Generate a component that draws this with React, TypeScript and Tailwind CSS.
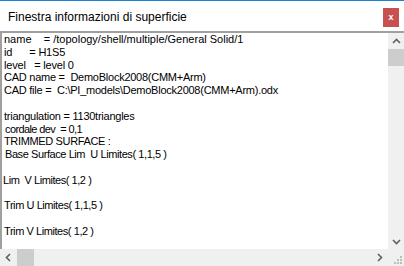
const lines: [string, string][] = [
  ['name    = /topology/shell/multiple/General Solid/1', 'tracking-[0px]'],
  ['id      = H1S5', 'tracking-[-0.2px]'],
  ['level   = level 0', 'tracking-[-0.2px]'],
  ['CAD name =  DemoBlock2008(CMM+Arm)', 'tracking-[-0.25px]'],
  ['CAD file =  C:\\PI_models\\DemoBlock2008(CMM+Arm).odx', 'tracking-[-0.25px]'],
  ['', ''],
  ['triangulation = 1130triangles', 'tracking-[-0.25px]'],
  ['cordale dev  = 0,1', 'tracking-[-0.6px] pl-[1px]'],
  ['TRIMMED SURFACE :', 'tracking-[-0.35px]'],
  ['Base Surface Lim  U Limites( 1,1,5 )', 'tracking-[-0.42px] pl-[1px]'],
  ['', ''],
  ['Lim  V Limites( 1,2 )', 'tracking-[-0.45px] -ml-[1px]'],
  ['', ''],
  ['Trim U Limites( 1,1,5 )', 'tracking-[-0.43px]'],
  ['', ''],
  ['Trim V Limites( 1,2 )', 'tracking-[-0.43px]'],
  ['', ''],
]

// small scrollbar arrow, drawn pointing up and rotated
function Arrow({ rotate }: { rotate: string }) {
  return (
    <svg width="9" height="9" viewBox="0 0 9 9" className={rotate}>
      <polyline points="1,6 4.5,2.5 8,6" fill="none" stroke="#606060" strokeWidth="1.6" />
    </svg>
  )
}

function SizeGrip() {
  const dots = [
    [8, 0],
    [5, 3],
    [8, 3],
    [2, 6],
    [5, 6],
    [8, 6],
  ]
  return (
    <svg width="10" height="8" viewBox="0 0 10 8">
      {dots.map(([x, y], i) => (
        <rect key={i} x={x} y={y} width="2" height="2" fill="#bcbcbc" />
      ))}
    </svg>
  )
}

export default function App() {
  return (
    <div className="w-[404px] h-[266px] bg-white flex flex-col overflow-hidden border-t border-[#1883d7] font-['Liberation_Sans',Arial,sans-serif]">
      {/* Title bar */}
      <div className="h-[30px] flex items-start justify-between pl-2 pr-[5px] shrink-0">
        <span className="text-[12px] leading-[14px] text-black mt-[9px]">Finestra informazioni di superficie</span>
        <div className="w-4 h-[19px] mt-[7px] bg-[#c75050] flex items-center justify-center">
          <span className="text-white text-[9px] font-bold leading-none pb-[1px]">x</span>
        </div>
      </div>

      {/* Text box */}
      <div className="flex-1 flex flex-col border-t-2 border-[#a0a0a0] min-h-0">
        <div className="flex-1 flex min-h-0">
          <div className="flex-1 overflow-hidden pl-[2px] border-l-2 border-[#a0a0a0]">
            {lines.map(([l, t], i) => (
              <div key={i} className={`h-[12.8px] leading-[12.8px] text-[11px] text-black whitespace-pre ${t}`}>
                {l}
              </div>
            ))}
          </div>
          <div className="w-4 bg-[#f0f0f0] flex flex-col items-center">
            <div className="h-4 flex items-center justify-center">
              <Arrow rotate="" />
            </div>
            <div className="w-4 h-[17px] bg-[#cdcdcd]" />
            <div className="flex-1" />
            <div className="h-4 flex items-center justify-center">
              <Arrow rotate="rotate-180" />
            </div>
          </div>
        </div>
        <div className="h-[17px] bg-[#f0f0f0] flex items-center shrink-0">
          <div className="w-[17px] h-[17px] flex items-center justify-center">
            <Arrow rotate="-rotate-90" />
          </div>
          <div className="w-[17px] h-[17px] bg-[#cdcdcd]" />
          <div className="flex-1" />
          <div className="w-[17px] h-[17px] flex items-center justify-center">
            <Arrow rotate="rotate-90" />
          </div>
          <div className="w-4 h-[17px] flex items-end justify-end pb-[2px] pr-[2px]">
            <SizeGrip />
          </div>
        </div>
      </div>
    </div>
  )
}
